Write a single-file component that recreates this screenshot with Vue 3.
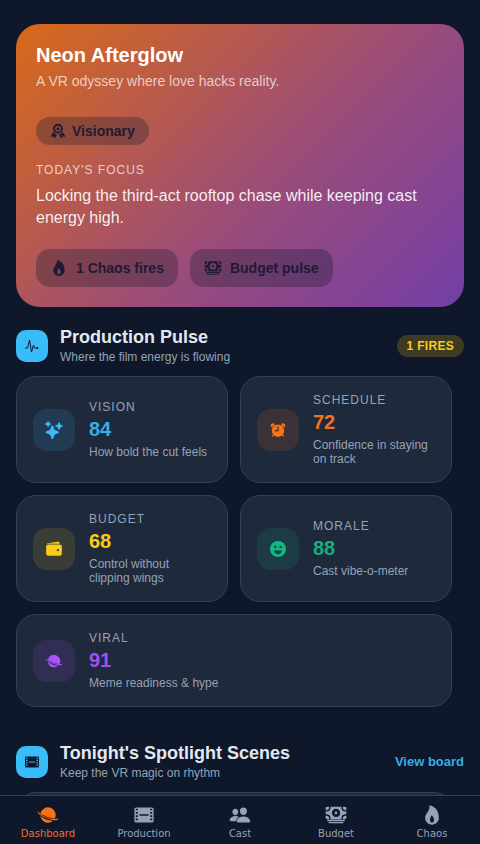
<template>
  <div class="screen">
    <main class="content">
      <!-- Hero -->
      <section class="hero">
        <h1 class="hero-title">Neon Afterglow</h1>
        <p class="hero-sub">A VR odyssey where love hacks reality.</p>
        <div class="chip">
          <svg class="chip-icon" viewBox="0 0 512 512"><path :d="icons.ribbon" fill-rule="evenodd" /></svg>
          <span>Visionary</span>
        </div>
        <p class="focus-label">TODAY'S FOCUS</p>
        <p class="focus-text">Locking the third-act rooftop chase while keeping cast energy high.</p>
        <div class="hero-actions">
          <button class="hero-btn">
            <svg class="btn-icon" viewBox="0 0 512 512"><path :d="icons.flame" /></svg>
            <span>1 Chaos fires</span>
          </button>
          <button class="hero-btn">
            <svg class="btn-icon" viewBox="0 0 512 512"><path :d="icons.cash" /></svg>
            <span>Budget pulse</span>
          </button>
        </div>
      </section>

      <!-- Production pulse -->
      <section class="pulse">
        <div class="section-head">
          <div class="section-icon">
            <svg viewBox="0 0 512 512" width="16" height="16">
              <path d="M48 320h64l64-256 64 384 64-224 32 96h64" fill="none" stroke="currentColor" stroke-width="32" stroke-linecap="round" stroke-linejoin="round" />
              <circle cx="432" cy="320" r="32" fill="currentColor" />
            </svg>
          </div>
          <div class="section-text">
            <h2>Production Pulse</h2>
            <p>Where the film energy is flowing</p>
          </div>
          <span class="fires-badge">1 FIRES</span>
        </div>

        <div class="metric-grid">
          <article v-for="m in metrics" :key="m.label" class="metric" :class="{ wide: m.wide }">
            <div class="metric-icon" :class="m.tone">
              <svg viewBox="0 0 512 512" width="18" height="18"><path :d="m.d" fill-rule="evenodd" /></svg>
            </div>
            <div class="metric-text">
              <span class="metric-label">{{ m.label }}</span>
              <span class="metric-value" :class="m.tone">{{ m.value }}</span>
              <span class="metric-desc">{{ m.desc }}</span>
            </div>
          </article>
        </div>
      </section>

      <!-- Spotlight scenes -->
      <section class="spotlight">
        <div class="section-head">
          <div class="section-icon">
            <svg viewBox="0 0 512 512" width="16" height="16"><path :d="icons.film" fill="currentColor" fill-rule="evenodd" /></svg>
          </div>
          <div class="section-text">
            <h2>Tonight's Spotlight Scenes</h2>
            <p>Keep the VR magic on rhythm</p>
          </div>
          <a class="view-board">View board</a>
        </div>
        <div class="scene-card"></div>
      </section>
    </main>

    <nav class="tabbar">
      <div v-for="t in tabs" :key="t.label" class="tab" :class="{ active: t.active }">
        <svg viewBox="0 0 512 512" width="22" height="22"><path :d="t.d" fill-rule="evenodd" /></svg>
        <span>{{ t.label }}</span>
      </div>
    </nav>
  </div>
</template>

<script setup>
const icons = {
  flame: 'M394.23 197.56a300.43 300.43 0 00-53.37-90C301.2 61.65 249.05 32 208 32a16 16 0 00-15.48 20c13.87 53-14.88 97.07-45.31 143.72C122 234.36 96 274.27 96 320c0 88.22 71.78 160 160 160s160-71.78 160-160c0-43.3-7.32-84.49-21.77-122.44zm-105.9 221.13C278 429.69 265.05 432 256 432s-22-2.31-32.33-13.31S208 390.24 208 368c0-25.14 8.82-44.28 17.34-62.78 4.95-10.74 10-21.67 13-33.37a8 8 0 0112.49-4.51A126.48 126.48 0 01275 292c18.17 24 29 52.42 29 76 0 22.24-5.42 39.77-15.67 50.69z',
  cash: 'M448 400H64a16 16 0 010-32h384a16 16 0 010 32zM416 448H96a16 16 0 010-32h320a16 16 0 010 32zM32 272H16v48a32 32 0 0032 32h48v-16a64.07 64.07 0 00-64-64zM480 240h16v-64h-16a96.11 96.11 0 01-96-96V64H128v16a96.11 96.11 0 01-96 96H16v64h16a96.11 96.11 0 0196 96v16h256v-16a96.11 96.11 0 0196-96zm-224 64a96 96 0 1196-96 96.11 96.11 0 01-96 96zM256 240a32 32 0 100-64 32 32 0 000 64zM16 96v48h16a64.07 64.07 0 0064-64V64H48a32 32 0 00-32 32zM496 96a32 32 0 00-32-32h-48v16a64.07 64.07 0 0064 64h16zM416 336v16h48a32 32 0 0032-32v-48h-16a64.07 64.07 0 00-64 64z',
  ribbon: 'M256 24a156 156 0 100 312 156 156 0 000-312zm0 64a92 92 0 110 184 92 92 0 010-184zm0 44a48 48 0 100 96 48 48 0 000-96zM104 280L28 418a14 14 0 0015 20l66-12 28 56a14 14 0 0024 1l62-116a190 190 0 01-119-87zM408 280a190 190 0 01-119 87l62 116a14 14 0 0024-1l28-56 66 12a14 14 0 0015-20z',
  film: 'M76 80h360a44 44 0 0144 44v264a44 44 0 01-44 44H76a44 44 0 01-44-44V124a44 44 0 0144-44zM64 124v24h48v-36H76a12 12 0 00-12 12zm0 60v40h48v-40zm0 76v40h48v-40zm0 76v28a12 12 0 0012 12h36v-40zm336-224v36h48v-24a12 12 0 00-12-12zm0 72v40h48v-40zm0 76v40h48v-40zm0 76v40h36a12 12 0 0012-12v-28zM148 240v32h216v-32z',
  sparkles: 'M208 512a24.84 24.84 0 01-23.34-16l-39.84-103.6a16.06 16.06 0 00-9.19-9.19L32 343.34a25 25 0 010-46.68l103.6-39.84a16.06 16.06 0 009.19-9.19L184.66 144a25 25 0 0146.68 0l39.84 103.6a16.06 16.06 0 009.19 9.19l103 39.63a25.49 25.49 0 0116.63 24.1 24.82 24.82 0 01-16 22.82l-103.6 39.84a16.06 16.06 0 00-9.19 9.19L231.34 496A24.84 24.84 0 01208 512zM88 176a14.67 14.67 0 01-13.69-9.4l-16.86-43.84a7.28 7.28 0 00-4.21-4.21L9.4 101.69a14.67 14.67 0 010-27.38l43.84-16.86a7.31 7.31 0 004.21-4.21L74.16 9.79A15 15 0 0186.23.11a14.67 14.67 0 0115.46 9.29l16.86 43.84a7.31 7.31 0 004.21 4.21l43.84 16.86a14.67 14.67 0 010 27.38l-43.84 16.86a7.28 7.28 0 00-4.21 4.21l-16.86 43.84A14.67 14.67 0 0188 176zM400 256a16 16 0 01-14.93-10.26l-22.84-59.37a8 8 0 00-4.6-4.6l-59.37-22.84a16 16 0 010-29.86l59.37-22.84a8 8 0 004.6-4.6l22.67-58.95a16.45 16.45 0 0113.17-10.57 16 16 0 0116.86 10.15l22.84 59.37a8 8 0 004.6 4.6l59.37 22.84a16 16 0 010 29.86l-59.37 22.84a8 8 0 00-4.6 4.6l-22.84 59.37A16 16 0 01400 256z',
  alarm: 'M153.59 110.46A21.41 21.41 0 00152.48 79 62.67 62.67 0 00112 64l-3.27.09h-.48C74.4 66.15 48 95.55 48.07 131c0 19 8 29.06 14.32 37.11a20.61 20.61 0 0014.7 7.8c.26 0 .7.05 2 .05a19.06 19.06 0 0013.75-5.89zM403.79 64.11l-3.27-.1H400a62.67 62.67 0 00-40.52 15 21.41 21.41 0 00-1.11 31.44l60.77 59.65a19.06 19.06 0 0013.79 5.9c1.28 0 1.72 0 2-.05a20.61 20.61 0 0014.69-7.8c6.36-8.05 14.3-18.08 14.34-37.11.04-35.44-26.36-64.84-60.17-66.93zM256.07 96c-97 0-176 78.95-176 176a175.23 175.23 0 0040.81 112.56l-36.12 36.13a16 16 0 1022.63 22.62l36.12-36.12a175.63 175.63 0 00225 0l36.13 36.12a16 16 0 1022.63-22.62l-36.13-36.13A175.17 175.17 0 00432.07 272c0-97-78.95-176-176-176zm16 176a16 16 0 01-16 16h-80a16 16 0 010-32h64v-96a16 16 0 0132 0z',
  wallet: 'M95.5 104h320a87.73 87.73 0 0111.18.71 66 66 0 00-77.51-55.56L86 94.08h-.3a66 66 0 00-41.07 26.13A87.57 87.57 0 0195.5 104zM415.5 128h-320a64.07 64.07 0 00-64 64v192a64.07 64.07 0 0064 64h320a64.07 64.07 0 0064-64V192a64.07 64.07 0 00-64-64zM368 320a32 32 0 1132-32 32 32 0 01-32 32z',
  happy: 'M256 28a228 228 0 100 456 228 228 0 000-456zm-76 136a34 34 0 110 68 34 34 0 010-68zm152 0a34 34 0 110 68 34 34 0 010-68zM144 296h224c-10 62-56 106-112 106s-102-44-112-106z',
  planet: 'M80.6 225.6A178 178 0 1 1 410 345.4A250 44 20 0 1 80.6 225.6ZM18 190A250 68 20 0 0 486 362L496 322A250 82 20 0 1 26 150ZM79.7 281.3A250 108 20 0 0 374.7 388.7A178 178 0 0 1 79.7 281.3Z',
  people: 'M336 256c-20.56 0-40.44-9.18-56-25.84-15.13-16.25-24.37-37.92-26-61-1.74-24.62 5.77-47.26 21.14-63.76S312 80 336 80c23.83 0 45.38 9.06 60.7 25.52 15.47 16.62 23 39.22 21.26 63.63-1.67 23.11-10.9 44.77-26 61C376.44 246.82 356.57 256 336 256zM467.83 432H204.18a27.71 27.71 0 01-22-10.67 30.22 30.22 0 01-5.26-25.79c8.42-33.81 29.28-61.85 60.32-81.08C264.79 297.4 299.86 288 336 288c36.85 0 71 9 98.71 26.05 31.11 19.13 52 47.33 60.38 81.55a30.27 30.27 0 01-5.32 25.78A27.68 27.68 0 01467.83 432zM147 260c-35.19 0-66.13-32.72-69-72.93-1.42-20.6 5-39.65 18-53.62 12.86-13.83 31-21.45 51-21.45s38 7.66 50.93 21.57c13.1 14.08 19.5 33.09 18 53.52-2.87 40.2-33.8 72.91-68.93 72.91zM212.66 291.45c-17.59-8.6-40.42-12.9-65.65-12.9-29.46 0-58.07 7.68-80.57 21.62-25.51 15.83-42.67 38.88-49.6 66.71a27.39 27.39 0 005.36 23.23A25.32 25.32 0 0042.4 400h111a8 8 0 007.87-6.57c.11-.63.25-1.26.41-1.88 8.48-34.06 28.35-62.84 57.71-83.82a8 8 0 00-6.73-15.72z',
}

const metrics = [
  { label: 'VISION', value: 84, desc: 'How bold the cut feels', tone: 'sky', d: icons.sparkles },
  { label: 'SCHEDULE', value: 72, desc: 'Confidence in staying on track', tone: 'orange', d: icons.alarm },
  { label: 'BUDGET', value: 68, desc: 'Control without clipping wings', tone: 'yellow', d: icons.wallet },
  { label: 'MORALE', value: 88, desc: 'Cast vibe-o-meter', tone: 'green', d: icons.happy },
  { label: 'VIRAL', value: 91, desc: 'Meme readiness & hype', tone: 'purple', d: icons.planet, wide: true },
]

const tabs = [
  { label: 'Dashboard', d: icons.planet, active: true },
  { label: 'Production', d: icons.film },
  { label: 'Cast', d: icons.people },
  { label: 'Budget', d: icons.cash },
  { label: 'Chaos', d: icons.flame },
]
</script>

<style>
html,
body {
  margin: 0;
  background: #0f172a;
}
</style>

<style scoped>
.screen {
  height: 844px;
  display: flex;
  flex-direction: column;
  overflow: hidden;
  background: #0f172a;
  font-family: "Liberation Sans", Arial, sans-serif;
}

.content {
  flex: 1;
  min-height: 0;
  overflow: hidden;
  padding: 24px 16px 0;
}

/* Hero */
.hero {
  padding: 20px;
  border-radius: 24px;
  background: linear-gradient(135deg, #d96a18 0%, #9c4d77 55%, #733ea8 100%);
  color: #fff;
}

.hero-title {
  margin: 0;
  font-size: 20px;
  line-height: 23px;
  font-weight: 700;
}

.hero-sub {
  margin: 6px 0 0;
  font-size: 14px;
  line-height: 16px;
  color: rgba(255, 255, 255, 0.7);
}

.chip {
  display: inline-flex;
  align-items: center;
  gap: 6px;
  height: 28px;
  margin-top: 28px;
  padding: 0 14px;
  border-radius: 14px;
  background: rgba(15, 23, 42, 0.3);
  color: #1e1b33;
  font-size: 14px;
  font-weight: 700;
}

.chip-icon {
  width: 16px;
  height: 16px;
  fill: currentColor;
}

.focus-label {
  margin: 18px 0 0;
  font-size: 12px;
  line-height: 14px;
  letter-spacing: 1px;
  color: rgba(255, 255, 255, 0.7);
}

.focus-text {
  margin: 8px 0 0;
  font-size: 16px;
  line-height: 22px;
  color: rgba(255, 255, 255, 0.92);
}

.hero-actions {
  display: flex;
  gap: 12px;
  margin-top: 20px;
}

.hero-btn {
  display: flex;
  align-items: center;
  gap: 8px;
  height: 38px;
  padding: 0 14px;
  border: none;
  border-radius: 14px;
  background: rgba(15, 23, 42, 0.3);
  color: #1e1b33;
  font-family: inherit;
  font-size: 14px;
  font-weight: 700;
}

.btn-icon {
  width: 18px;
  height: 18px;
  fill: currentColor;
}

/* Sections */
.pulse {
  margin-top: 20px;
}

.spotlight {
  margin-top: 36px;
}

.section-head {
  display: flex;
  align-items: center;
  gap: 12px;
}

.section-icon {
  display: flex;
  align-items: center;
  justify-content: center;
  width: 32px;
  height: 32px;
  flex-shrink: 0;
  border-radius: 10px;
  background: #38bdf8;
  color: #0f172a;
}

.section-text {
  flex: 1;
  min-width: 0;
}

.section-text h2 {
  margin: 0;
  font-size: 18px;
  line-height: 21px;
  font-weight: 700;
  color: #e2e8f0;
}

.section-text p {
  margin: 2px 0 0;
  font-size: 12px;
  line-height: 14px;
  color: #94a3b8;
}

.fires-badge {
  padding: 4px 10px;
  border-radius: 11px;
  background: rgba(250, 204, 21, 0.2);
  color: #facc15;
  font-size: 12px;
  line-height: 14px;
  font-weight: 700;
  letter-spacing: 0.3px;
}

.view-board {
  color: #36ade8;
  font-size: 13px;
  font-weight: 700;
}

/* Metric cards */
.metric-grid {
  display: grid;
  grid-template-columns: 212px 212px;
  gap: 12px;
  margin-top: 12px;
}

.metric {
  display: flex;
  align-items: center;
  gap: 14px;
  padding: 16px;
  border: 1px solid #334155;
  border-radius: 20px;
  background: #1e293b;
}

.metric.wide {
  grid-column: span 2;
}

.metric-icon {
  display: flex;
  align-items: center;
  justify-content: center;
  width: 42px;
  height: 42px;
  flex-shrink: 0;
  border-radius: 14px;
}

.metric-icon svg {
  fill: currentColor;
}

.metric-icon.sky { color: #38bdf8; background: rgba(56, 189, 248, 0.13); }
.metric-icon.orange { color: #f97316; background: rgba(249, 115, 22, 0.13); }
.metric-icon.yellow { color: #facc15; background: rgba(250, 204, 21, 0.13); }
.metric-icon.green { color: #10b981; background: rgba(16, 185, 129, 0.13); }
.metric-icon.purple { color: #a855f7; background: rgba(168, 85, 247, 0.13); }

.metric-text {
  display: flex;
  flex-direction: column;
  gap: 4px;
  min-width: 0;
}

.metric-label {
  font-size: 12px;
  line-height: 14px;
  letter-spacing: 1px;
  color: #94a3b8;
}

.metric-value {
  font-size: 20px;
  line-height: 23px;
  font-weight: 700;
}

.metric-value.sky { color: #36ade8; }
.metric-value.orange { color: #ee7320; }
.metric-value.yellow { color: #facc15; }
.metric-value.green { color: #12b07c; }
.metric-value.purple { color: #a04ff0; }

.metric-desc {
  font-size: 12px;
  line-height: 14px;
  color: #94a3b8;
}

.scene-card {
  height: 120px;
  margin-top: 12px;
  width: 436px;
  border: 1px solid #334155;
  border-radius: 20px;
  background: #1e293b;
}

/* Bottom tabs */
.tabbar {
  display: flex;
  flex-shrink: 0;
  height: 48px;
  overflow: hidden;
  border-top: 1px solid #334155;
  background: #0f172a;
}

.tab {
  flex: 1;
  display: flex;
  flex-direction: column;
  align-items: center;
  padding-top: 8px;
  color: #94a3b8;
  font-family: "DejaVu Sans", sans-serif;
  font-size: 10px;
  line-height: 12px;
}

.tab svg {
  fill: currentColor;
  flex-shrink: 0;
}

.tab span {
  display: block;
  height: 10px;
  margin-top: 2px;
  overflow: hidden;
}

.tab.active {
  color: #f97316;
}

.tab.active span {
  color: #ea7328;
}
</style>
